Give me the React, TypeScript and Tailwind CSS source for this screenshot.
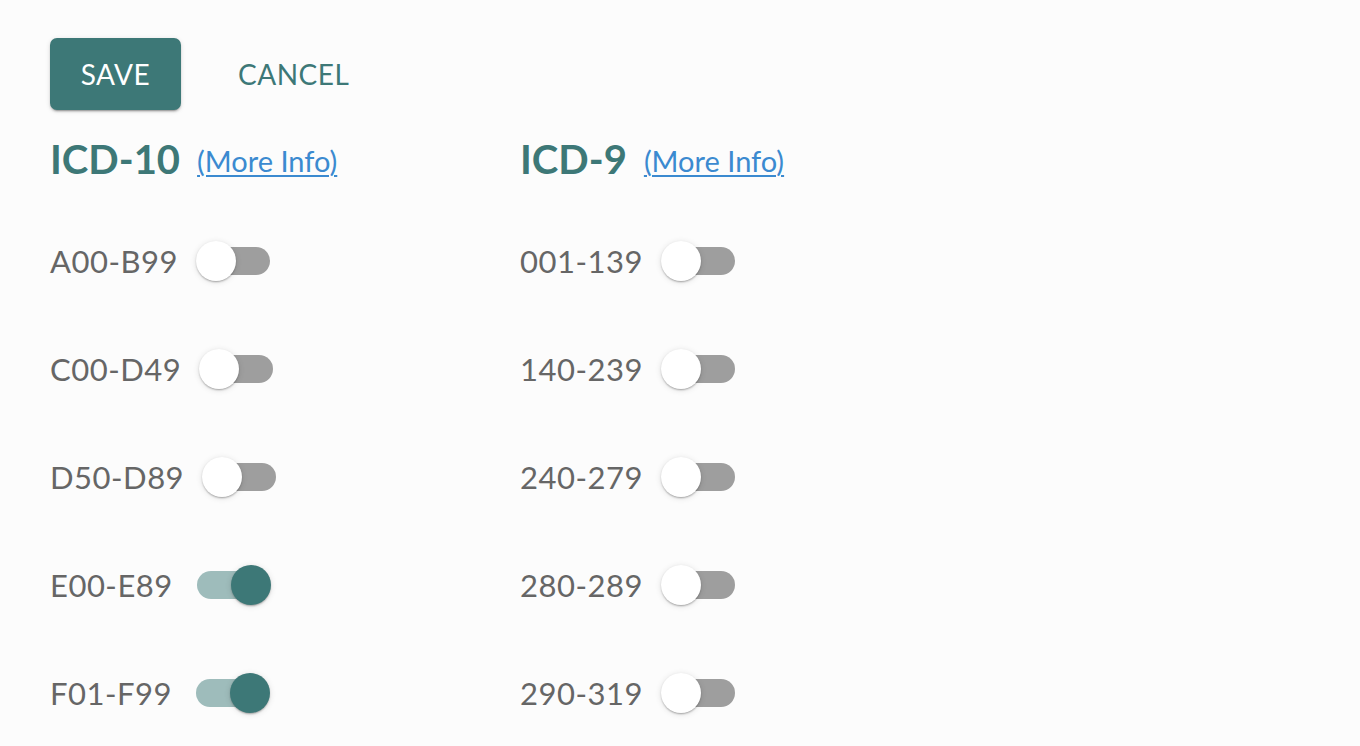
import React from "react";

function Toggle({ on }: { on: boolean }) {
  return (
    <div className="relative w-[116px] h-[76px] shrink-0">
      <div
        className={
          "absolute left-[24px] top-[24px] w-[68px] h-[28px] rounded-full " +
          (on ? "bg-[#9ebcbb]" : "bg-[#9e9e9e]")
        }
      />
      <div
        className={
          "absolute top-[18px] w-[40px] h-[40px] rounded-full shadow-[0_2px_2px_-1px_rgba(0,0,0,0.2),0_1px_2px_0_rgba(0,0,0,0.14),0_1px_6px_0_rgba(0,0,0,0.12)] " +
          (on ? "left-[58px] bg-[#3d7877]" : "left-[18px] bg-white")
        }
      />
    </div>
  );
}

function Row({ label, on }: { label: string; on: boolean }) {
  return (
    <div className="flex items-center h-[76px]">
      <span className="text-[31px] tracking-[0.5px] leading-none text-[#666666]">{label}</span>
      <Toggle on={on} />
    </div>
  );
}

function Column({
  title,
  rows,
  width,
}: {
  title: string;
  rows: { label: string; on: boolean }[];
  width: string;
}) {
  return (
    <div className={"flex flex-col " + width}>
      <div className="flex items-baseline h-[48px]">
        <h2 className="text-[40px] font-bold leading-[48px] text-[#3d7877]">{title}</h2>
        <a
          href="#"
          className="ml-[17px] relative -top-[2px] text-[29px] leading-[48px] text-[#3b8ad0] underline decoration-[2px] underline-offset-[3px]"
        >
          (More Info)
        </a>
      </div>
      <div className="flex flex-col gap-[32px] mt-[40px]">
        {rows.map((r) => (
          <Row key={r.label} label={r.label} on={r.on} />
        ))}
      </div>
    </div>
  );
}

export default function App() {
  return (
    <div className="min-h-screen bg-[#fcfcfc] pl-[50px] pt-[38px] font-['Lato',sans-serif] overflow-hidden">
      <div className="flex items-center gap-[24px]">
        <button className="w-[131px] h-[72px] rounded-[7px] bg-[#3d7877] text-white text-[28px] tracking-[0.5px] uppercase shadow-[0_3px_1px_-2px_rgba(0,0,0,0.2),0_2px_2px_0_rgba(0,0,0,0.14),0_1px_5px_0_rgba(0,0,0,0.12)]">
          SAVE
        </button>
        <button className="h-[72px] px-[33px] text-[28px] tracking-[0.5px] uppercase text-[#3d7877]">
          CANCEL
        </button>
      </div>
      <div className="flex mt-[25px]">
        <Column
          title="ICD-10"
          width="w-[470px]"
          rows={[
            { label: "A00-B99", on: false },
            { label: "C00-D49", on: false },
            { label: "D50-D89", on: false },
            { label: "E00-E89", on: true },
            { label: "F01-F99", on: true },
          ]}
        />
        <Column
          title="ICD-9"
          width="w-[400px]"
          rows={[
            { label: "001-139", on: false },
            { label: "140-239", on: false },
            { label: "240-279", on: false },
            { label: "280-289", on: false },
            { label: "290-319", on: false },
          ]}
        />
      </div>
    </div>
  );
}
